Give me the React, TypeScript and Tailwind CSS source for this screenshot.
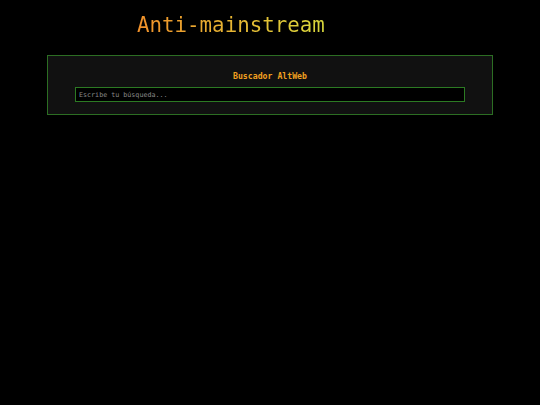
export default function App() {
  return (
    <div className="min-h-[405px] bg-black font-['DejaVu_Sans_Mono',monospace]">
      <header className="pl-[137px] pt-[11px] h-[55px]">
        <h1 className="inline-block text-[20.8px] leading-[28px] bg-gradient-to-r from-[#f0902a] to-[#d8d83c] bg-clip-text text-transparent">
          Anti-mainstream
        </h1>
      </header>
      <section className="mx-[47px] border border-[#2c6e23] bg-[#111111] px-[27px] pt-[14px] pb-[12px]">
        <h2 className="text-center text-[8.2px] leading-[12px] font-bold text-[#f0a020]">Buscador AltWeb</h2>
        <input
          className="mt-[5px] block w-full h-[15px] border border-[#2c7a23] bg-black px-[3px] text-[6.7px] text-[#bbbbbb] placeholder:text-[#888888] outline-none"
          placeholder="Escribe tu búsqueda..."
        />
      </section>
    </div>
  );
}
